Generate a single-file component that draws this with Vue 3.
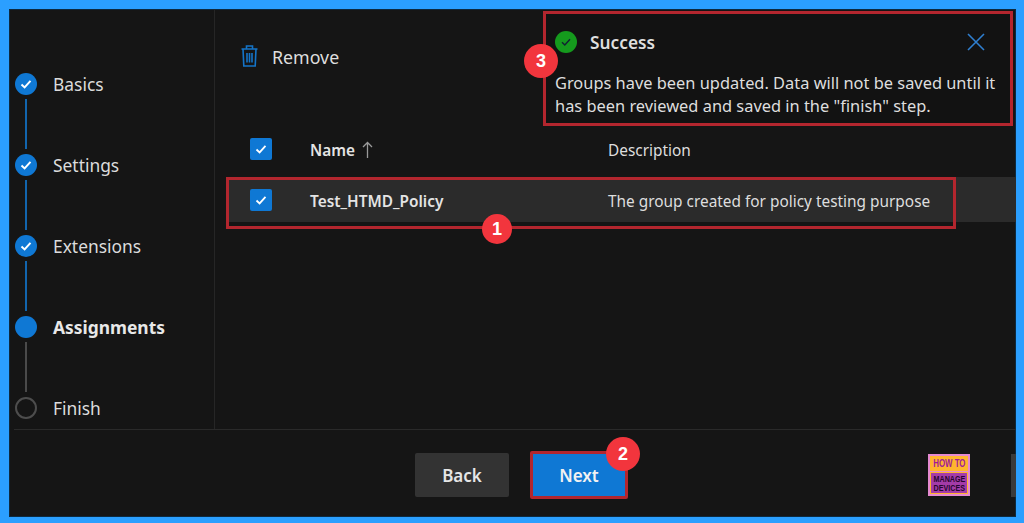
<template>
  <div class="frame">
    <div class="panel">
      <div class="main">
        <!-- wizard steps -->
        <aside class="steps">
          <div v-for="(step, i) in steps" :key="step.label" class="step">
            <div class="marker">
              <span class="dot" :class="step.state">
                <svg v-if="step.state === 'done'" width="12" height="12" viewBox="0 0 12 12">
                  <path d="M1.5 6.5 L4.6 9.4 L10.5 2.8" fill="none" stroke="#fff" stroke-width="2" />
                </svg>
              </span>
              <span v-if="i < steps.length - 1" class="link" :class="{ grey: step.state === 'current' }"></span>
            </div>
            <span class="step-label" :class="{ bold: step.state === 'current' }">{{ step.label }}</span>
          </div>
        </aside>

        <section class="content">
          <div class="toolbar">
            <svg class="trash" width="17" height="22" viewBox="0 0 17 22">
              <path d="M0.5 4 H16.5 M5.5 4 V1 H11.5 V4 M2 4 L2.8 21 H14.2 L15 4 M6 8 V17.5 M8.5 8 V17.5 M11 8 V17.5" fill="none" stroke="#1474c8" stroke-width="1.6" />
            </svg>
            <span class="remove-label">Remove</span>
          </div>

          <div class="head-row">
            <span class="check"><svg width="14" height="14" viewBox="0 0 14 14"><path d="M2.5 7.5 L5.6 10.4 L11.5 3.8" fill="none" stroke="#fff" stroke-width="1.8" /></svg></span>
            <span class="name-col semi">Name
              <svg class="arrow" width="11" height="18" viewBox="0 0 11 18"><path d="M5.5 1.5 V17 M1 6 L5.5 1.5 L10 6" fill="none" stroke="#9a9a9a" stroke-width="1.3" /></svg>
            </span>
            <span class="cell-text">Description</span>
          </div>

          <div class="row">
            <span class="check"><svg width="14" height="14" viewBox="0 0 14 14"><path d="M2.5 7.5 L5.6 10.4 L11.5 3.8" fill="none" stroke="#fff" stroke-width="1.8" /></svg></span>
            <span class="name-col semi shift">Test_HTMD_Policy</span>
            <span class="cell-text shift">The group created for policy testing purpose</span>
          </div>
        </section>
      </div>

      <footer class="footer">
        <button class="btn back">Back</button>
        <button class="btn next">Next</button>
        <div class="logo">
          <div class="logo-top"><span>HOW TO</span></div>
          <div class="logo-bottom"><span>MANAGE</span><span>DEVICES</span></div>
        </div>
        <span class="scroll-stub"></span>
      </footer>
    </div>

    <!-- notification, sits over the page -->
    <div class="toast">
      <div class="toast-head">
        <span class="ok">
          <svg width="12" height="12" viewBox="0 0 12 12"><path d="M2 6.3 L4.8 9 L10 3.2" fill="none" stroke="#123" stroke-width="1.4" /></svg>
        </span>
        <span class="toast-title">Success</span>
        <svg class="close" width="18" height="18" viewBox="0 0 18 18">
          <path d="M1 1 L17 17 M17 1 L1 17" fill="none" stroke="#2f7fd0" stroke-width="1.6" />
        </svg>
      </div>
      <p class="toast-text">Groups have been updated. Data will not be saved until it has been reviewed and saved in the "finish" step.</p>
    </div>

    <!-- red annotations -->
    <div class="row-mark"></div>
    <span class="badge b1">1</span>
    <span class="badge b2">2</span>
    <span class="badge b3">3</span>
  </div>
</template>

<script setup>
const steps = [
  { label: 'Basics', state: 'done' },
  { label: 'Settings', state: 'done' },
  { label: 'Extensions', state: 'done' },
  { label: 'Assignments', state: 'current' },
  { label: 'Finish', state: 'todo' }
]
</script>

<style>
html, body {
  margin: 0;
  background: #2b9fff;
}
</style>

<style scoped>
.frame {
  position: relative;
  box-sizing: border-box;
  width: 1024px;
  height: 523px;
  padding: 9px 8px 6px 9px;
  background: #2b9fff;
  overflow: hidden;
  font-family: "Noto Sans", "Open Sans", sans-serif;
  font-size: 15.4px;
  color: #dedede;
}
.panel {
  display: flex;
  flex-direction: column;
  height: 100%;
  background: #151515;
  box-shadow: inset 0 0 0 1px #0d2a40;
}
.main {
  display: flex;
  flex: 0 0 420px;
  height: 420px;
}
.steps {
  box-sizing: border-box;
  width: 206px;
  padding: 64px 0 0 6px;
  border-right: 1px solid #262626;
}
.step {
  display: flex;
  gap: 16px;
  height: 81px;
}
.step:last-child {
  height: 22px;
}
.marker {
  display: flex;
  flex-direction: column;
  align-items: center;
  width: 22px;
  gap: 4px;
}
.dot {
  box-sizing: border-box;
  display: flex;
  align-items: center;
  justify-content: center;
  width: 22px;
  height: 22px;
  border-radius: 50%;
  background: #0f78d4;
}
.dot.todo {
  background: none;
  border: 2px solid #4d4d4d;
}
.link {
  width: 2px;
  height: 50px;
  background: #1265ad;
}
.link.grey {
  background: #4a4a4a;
}
.step-label {
  line-height: 22px;
  font-size: 17.4px;
  color: #dcdcdc;
}
.step-label.bold {
  font-weight: 700;
  color: #e8e8e8;
}
.content {
  flex: 1;
  min-width: 0;
  padding-top: 36px;
}
.toolbar {
  display: flex;
  align-items: center;
  gap: 14px;
  height: 22px;
  padding-left: 26px;
  margin-bottom: 71px;
  font-size: 17.8px;
}
.remove-label {
  padding-top: 1px;
}
.head-row, .row {
  display: grid;
  grid-template-columns: 60px 298px 1fr;
  align-items: center;
}
.head-row {
  height: 22px;
  margin: 0 0 17px 35px;
}
.row {
  height: 45px;
  margin-left: 12px;
  padding-left: 23px;
  background: #2b2b2b;
}
.check {
  display: flex;
  align-items: center;
  justify-content: center;
  width: 22px;
  height: 22px;
  border-radius: 2px;
  background: #0f78d4;
}
.semi {
  position: relative;
  top: 1px;
  font-weight: 600;
  color: #e4e4e4;
}
.cell-text {
  position: relative;
  top: 1px;
}
.shift {
  top: 2px;
}
.arrow {
  margin-left: 3px;
  vertical-align: -3px;
}
.footer {
  flex: 1;
  display: flex;
  align-items: center;
  box-sizing: border-box;
  border-top: 1px solid #2a2a2a;
  margin-left: 5px;
  padding: 3px 0 0 401px;
}
.btn {
  box-sizing: border-box;
  border: none;
  border-radius: 2px;
  font: 600 17px "Noto Sans", "Open Sans", sans-serif;
  color: #e6e6e6;
}
.back {
  width: 94px;
  height: 44px;
  background: #333333;
}
.next {
  width: 98px;
  height: 48px;
  margin-left: 21px;
  background: #0f78d4;
  border: 3px solid #b3262e;
  color: #f2f2f2;
}
.logo {
  box-sizing: border-box;
  display: flex;
  flex-direction: column;
  gap: 1px;
  width: 42px;
  height: 42px;
  margin-left: 300px;
  padding: 2px;
  background: #e58ad0;
  font-family: "Liberation Sans", sans-serif;
  text-align: center;
  overflow: hidden;
}
.logo-top {
  flex: 0 0 15px;
  line-height: 15px;
  font-size: 7.5px;
  font-weight: 700;
  color: #a01a9a;
  background: #ffb52e;
}
.logo-top span {
  display: inline-block;
  transform: scale(1.05, 1.4);
}
.logo-bottom {
  flex: 1;
  display: flex;
  flex-direction: column;
  align-items: center;
  justify-content: center;
  line-height: 9px;
  font-size: 6.5px;
  font-weight: 700;
  color: #26062e;
  background: #a43ba8;
  border: 1px solid #ffb52e;
  white-space: nowrap;
}
.logo-bottom span {
  display: block;
  transform: scale(1.1, 1.3);
}
.scroll-stub {
  width: 5px;
  height: 43px;
  margin-left: auto;
  background: #3a3a3a;
}
.toast {
  position: absolute;
  left: 543px;
  top: 11px;
  box-sizing: border-box;
  width: 470px;
  height: 115px;
  padding: 16px 9px 0 9px;
  background: #121212;
  border: 3px solid #b3262e;
}
.toast-head {
  display: flex;
  align-items: center;
  height: 24px;
}
.ok {
  display: flex;
  align-items: center;
  justify-content: center;
  width: 22px;
  height: 22px;
  border-radius: 50%;
  background: #159a1d;
}
.toast-title {
  margin-left: 13px;
  font-size: 17.3px;
  font-weight: 600;
}
.close {
  margin-left: auto;
  margin-right: 16px;
}
.toast-text {
  margin: 17px 0 0;
  line-height: 23px;
  font-size: 16.4px;
}
.row-mark {
  position: absolute;
  left: 226px;
  top: 177px;
  box-sizing: border-box;
  width: 730px;
  height: 52px;
  border: 3px solid #b3262e;
}
.badge {
  position: absolute;
  display: flex;
  align-items: center;
  justify-content: center;
  width: 34px;
  height: 34px;
  border-radius: 50%;
  background: #f2353d;
  color: #fff;
  font: 700 18px "Liberation Sans", sans-serif;
}
.b1 {
  left: 482px;
  top: 214px;
  width: 30px;
  height: 30px;
}
.b2 {
  left: 606px;
  top: 437px;
}
.b3 {
  left: 524px;
  top: 44px;
}
</style>
